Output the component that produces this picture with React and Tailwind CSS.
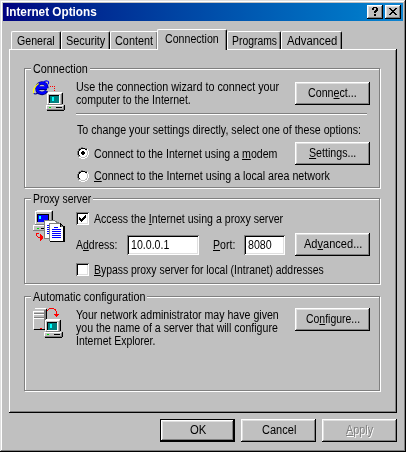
import { useLayoutEffect, useRef, useState } from "react";

// One line of text squeezed horizontally to the given width.
function T({ w, className = "", children }) {
  const ref = useRef(null);
  const [scale, setScale] = useState(1);
  useLayoutEffect(() => {
    setScale(w / ref.current.offsetWidth);
  }, [w]);
  return (
    <span className={`block h-[13px] shrink-0 text-[12px] leading-[14px] whitespace-nowrap ${className}`} style={{ width: w }}>
      <span ref={ref} className="inline-block origin-left" style={{ transform: `scaleX(${scale})` }}>
        {children}
      </span>
    </span>
  );
}

function U({ children }) {
  return <span className="underline decoration-1 underline-offset-1">{children}</span>;
}

const raised =
  "shadow-[inset_-1px_-1px_0_#000,inset_1px_1px_0_#fff,inset_-2px_-2px_0_#808080,inset_2px_2px_0_#dfdfdf]";

function Button({ w, primary, disabled, className = "", children }) {
  const edge = primary
    ? "border border-black shadow-[inset_-1px_-1px_0_#000,inset_1px_1px_0_#fff,inset_-2px_-2px_0_#808080,inset_2px_2px_0_#dfdfdf]"
    : raised;
  return (
    <button
      className={`flex h-[23px] w-[75px] shrink-0 items-start justify-center bg-[#c0c0c0] ${edge} ${
        primary ? "pt-[3px]" : "pt-1"
      } ${disabled ? "text-[#808080] [text-shadow:1px_1px_0_#fff]" : ""} ${className}`}
    >
      <T w={w}>{children}</T>
    </button>
  );
}

function Tab({ w, text, active, className = "" }) {
  return (
    <div
      className={`flex shrink-0 items-start justify-center rounded-t-[2px] border-t border-r border-l border-t-white border-r-black border-l-white bg-[#c0c0c0] shadow-[inset_-1px_0_0_#808080] ${
        active ? "relative z-10 -mb-px h-[21px] pt-[2px]" : "h-[18px] pt-[2px]"
      } ${className}`}
    >
      <T w={w}>{text}</T>
    </div>
  );
}

function Group({ title, titleWidth, className = "", children }) {
  return (
    <fieldset className={`min-w-0 ${className}`}>
      <div className="h-full border border-[#808080] shadow-[1px_1px_0_#fff,inset_1px_1px_0_#fff]">
        <div className="-mt-[7px] ml-[6px] flex w-fit bg-[#c0c0c0] px-[2px]">
          <T w={titleWidth}>{title}</T>
        </div>
        {children}
      </div>
    </fieldset>
  );
}

function Radio({ checked }) {
  return (
    <svg width="12" height="12" viewBox="0 0 12 12" className="shrink-0" shapeRendering="crispEdges">
      <path d="M4 0h4v1h2v1H8V1zM2 1h2v1H2zM1 2h1v2H1zM0 4h1v4H0zM1 8h1v2H1zM4 0v1h4V0z" fill="#808080" />
      <path d="M4 1h4v1h2v1H8V2H4v1H2V2h2zM2 3h1v1H2v4H1V4h1zM2 8h1v1H2z" fill="#000" />
      <path d="M10 2h1v2h1v4h-1v2h-1v1H8v1H4v-1H2v-1h2v1h4v-1h2V8h1V4h-1z" fill="#fff" />
      <path d="M4 2h4v1h1v1h1v4H9v1H8v1H4V9H3V8H2V4h1V3h1z" fill="#fff" />
      {checked && <path d="M5 4h2v1h1v2H7v1H5V7H4V5h1z" fill="#000" />}
    </svg>
  );
}

const sunken =
  "bg-white shadow-[inset_1px_1px_0_#808080,inset_-1px_-1px_0_#fff,inset_2px_2px_0_#000,inset_-2px_-2px_0_#dfdfdf]";

function Check({ checked }) {
  return (
    <div className={`size-[13px] shrink-0 ${sunken}`}>
      {checked && (
        <svg width="13" height="13" viewBox="0 0 13 13" shapeRendering="crispEdges">
          <path d="M3 5h1v1h1v1h1V6h1V5h1V4h1V3h1v3H9v1H8v1H7v1H6v1H5V9H4V8H3z" fill="#000" />
        </svg>
      )}
    </div>
  );
}

// Small grey desktop computer used by two of the icons.
function Computer({ x, y }) {
  return (
    <g transform={`translate(${x} ${y})`}>
      <path d="M2 1h15v11H2z" fill="#000" />
      <path d="M1 1h15v11H1z" fill="#c0c0c0" />
      <path d="M2 0h14v1H2zM1 1h14v1H2v10H1z" fill="#fff" />
      <path d="M15 2h1v10h-1z" fill="#808080" />
      <path d="M3 3h10v8H3z" fill="#000" />
      <path d="M4 4h9v7H4z" fill="#008080" />
      <path d="M6 5h2v4H6z" fill="#00ffff" />
      <path d="M13 3h1v9H3v-1h10z" fill="#fff" />
      <path d="M1 13h18v5h-1v1H1z" fill="#000" />
      <path d="M0 13h18v5H0z" fill="#c0c0c0" />
      <path d="M0 13h17v1H1v3H0z" fill="#fff" />
      <path d="M17 14h1v4H1v-1h16zM2 12h14v1H2z" fill="#808080" />
      <path d="M10 15h6v1h-6z" fill="#000" />
      <path d="M3 15h2v1H3z" fill="#00e000" />
    </g>
  );
}

function ConnectIcon() {
  return (
    <svg width="32" height="32" viewBox="0 0 32 32" className="shrink-0">
      <path d="M14 8.2H5.2M14 8.2C14 1.2 4 1.2 4 8.2C4 14.6 11.5 14.6 13.6 10.8" fill="none" stroke="#000080" strokeWidth="3.4" />
      <path d="M14 7.8H5M13.6 7.8C13.6 1.4 4 1.4 4 7.8C4 14 11 14 13 10.8" fill="none" stroke="#0000ff" strokeWidth="2.5" />
      <path d="M10.5 2C13 .6 15.6.4 15.6 2.4c0 .6-.2 1.2-.6 1.8" fill="none" stroke="#0000ff" strokeWidth="1.1" />
      <path d="M5.6 3.4C1.6 6.2-.8 11.2.8 13.2" fill="none" stroke="#ffff00" strokeWidth="1.2" />
      <path d="M.8 13.2c.8 1.2 2.8.6 4.4-.4" fill="none" stroke="#0000a0" strokeWidth="1.1" />
      <g shapeRendering="crispEdges">
        <path d="M17 6h1v1h-1zM19 6h1v1h-1zM21 6h1v1h-1zM21 8h1v1h-1zM21 10h1v1h-1z" fill="#ff0000" />
        <Computer x={13} y={12} />
      </g>
    </svg>
  );
}

function ProxyIcon() {
  return (
    <svg width="32" height="32" viewBox="0 0 32 32" className="shrink-0" shapeRendering="crispEdges">
      <path d="M4 1h16v13H4z" fill="#000" />
      <path d="M2 1h17v13H2z" fill="#c0c0c0" />
      <path d="M4 0h15v1H4zM2 1h16v1H3v12H2z" fill="#fff" />
      <path d="M18 2h1v12h-1z" fill="#808080" />
      <path d="M4 4h12v8H4z" fill="#000" />
      <path d="M5 5h10v7H5z" fill="#0000ff" />
      <path d="M6 6h2v3H6z" fill="#00ffff" />
      <path d="M0 15h13v6H0z" fill="#c0c0c0" />
      <path d="M0 15h13v1H1v4H0z" fill="#fff" />
      <path d="M0 20h12v1H0zM2 14h12v1H2z" fill="#808080" />
      <path d="M4 18h2v1H4z" fill="#00e000" />
      <path d="M8 18h3v1H8z" fill="#000" />
      <path d="M11 10h11v1h2v1h2v17H11z" fill="#808080" />
      <path d="M12 11h10v1h1v1h2v15H12z" fill="#fff" />
      <path d="M14 15h2v1h-2zM14 17h2v1h-2zM14 19h2v1h-2zM14 21h2v1h-2zM14 23h2v1h-2z" fill="#0000ff" />
      <path d="M16 13h12v1h1v1h1v1h2v16H17v-1h-1z" fill="#000" />
      <path d="M17 14h10v3h3v14H17z" fill="#fff" />
      <path d="M16 13h11v1H17v17h-1zM28 15h1v1h1v1h-2z" fill="#808080" />
      <path d="M21 17h4v1h-4zM19 19h9v1h-9zM19 21h9v1h-9zM19 23h9v1h-9zM19 25h9v1h-9zM19 27h9v1h-9z" fill="#0000ff" />
      <path d="M4 23h2v1H4v2h1v1h2v-3h1v1h1v1h1v3H9v1H8v1H7v-3H5v-1H4v-1H3v-3h1z" fill="#ff0000" />
    </svg>
  );
}

function ConfigIcon() {
  return (
    <svg width="32" height="32" viewBox="0 0 32 32" className="shrink-0" shapeRendering="crispEdges">
      <path d="M2 0h11v1h1v20h-1v1H1v-1H0V2h1V1h1z" fill="#000" />
      <path d="M0 2h11v19H0zM2 0h11v2H1V1h1z" fill="#c0c0c0" />
      <path d="M2 0h11v1H2zM0 3h11v1H1v17H0zM1 6h10v1H1zM1 10h10v1H1z" fill="#fff" />
      <path d="M11 2h2v19h-2zM1 5h10v1H1zM1 9h10v1H1z" fill="#808080" />
      <path d="M7 20h2v1H7z" fill="#ff0000" />
      <path d="M16 0h5v1h2v2h1v3h2v1h-1v1h-1v1h-1V8h-1V7h-1V6h2V3h-1V2h-1V1h-5v1h-1v1h-1V2h1V1h1z" fill="#ff0000" />
      <Computer x={11} y={11} />
    </svg>
  );
}

function CaptionButton({ children }) {
  return (
    <div className={`flex h-[14px] w-4 items-start justify-center bg-[#c0c0c0] ${raised}`}>{children}</div>
  );
}

export default function App() {
  return (
    <div className="h-[452px] w-[406px] overflow-hidden bg-[#c0c0c0] p-[3px] font-['Liberation_Sans',Arial,sans-serif] text-black shadow-[inset_-1px_-1px_0_#000,inset_1px_1px_0_#dfdfdf,inset_-2px_-2px_0_#808080,inset_2px_2px_0_#fff]">
      <header className="flex h-[18px] items-start bg-linear-to-r from-[#000080] to-[#1084d0] pt-[2px] pr-[2px] pl-[3px]">
        <T w={91} className="font-bold text-white">Internet Options</T>
        <div className="ml-auto flex gap-[2px]">
          <CaptionButton>
            <svg width="16" height="14" viewBox="0 0 16 14" shapeRendering="crispEdges">
              <path d="M6 2h4v1h1v3h-1v1H9v1H7V6h1V5h1V3H7v2H5V3h1zM7 9h2v2H7z" fill="#000" />
            </svg>
          </CaptionButton>
          <CaptionButton>
            <svg width="16" height="14" viewBox="0 0 16 14" shapeRendering="crispEdges">
              <path d="M4 3h2v1h1v1h2V4h1V3h2v1h-1v1h-1v1H9v1h1v1h1v1h1v1h-2V9H9V8H7v1H6v1H4V9h1V8h1V7h1V6H6V5H5V4H4z" fill="#000" />
            </svg>
          </CaptionButton>
        </div>
      </header>

      <nav className="mt-2 flex h-5 items-end pl-2">
        <Tab w={38} text="General" className="w-[50px]" />
        <Tab w={39} text="Security" className="w-[49px]" />
        <Tab w={38} text="Content" className="w-[48px]" />
        <Tab w={54} text="Connection" active className="-ml-px w-[70px]" />
        <Tab w={45} text="Programs" className="w-[54px]" />
        <Tab w={50} text="Advanced" className="w-[61px]" />
      </nav>

      <main className="ml-[6px] h-[364px] w-[388px] bg-[#c0c0c0] px-[15px] pt-[19px] shadow-[inset_-1px_-1px_0_#000,inset_1px_1px_0_#fff,inset_-2px_-2px_0_#808080]">
        <Group title="Connection" titleWidth={55} className="h-[120px] w-[356px]">
          <div className="mt-[5px] flex pl-2">
            <ConnectIcon />
            <div className="ml-[11px] w-[219px]">
              <T w={203}>Use the connection wizard to connect your</T>
              <T w={115}>computer to the Internet.</T>
            </div>
            <Button w={49} className="mt-[2px]">Conn<U>e</U>ct...</Button>
          </div>
          <div className="mt-px ml-[51px] h-[2px] w-[291px] border-t border-b border-t-[#808080] border-b-white" />
          <div className="mt-2 ml-[52px]">
            <T w={284}>To change your settings directly, select one of these options:</T>
          </div>
          <div className="mt-[6px] ml-[52px] flex items-start">
            <div className="pt-[5px]"><Radio checked /></div>
            <T w={183} className="mt-[5px] ml-[5px]">Connect to the Internet using a <U>m</U>odem</T>
            <Button w={47} className="ml-[18px]"><U>S</U>ettings...</Button>
          </div>
          <div className="mt-1 ml-[52px] flex items-start">
            <div className="pt-px"><Radio /></div>
            <T w={236} className="ml-[5px]"><U>C</U>onnect to the Internet using a local area network</T>
          </div>
        </Group>

        <Group title="Proxy server" titleWidth={58} className="mt-[10px] h-[86px] w-[356px]">
          <div className="mt-[5px] flex pl-2">
            <ProxyIcon />
            <div className="-mt-px ml-[11px]">
              <div className="flex items-start pt-[3px]">
                <Check checked />
                <T w={189} className="ml-[5px]">Access the <U>I</U>nternet using a proxy server</T>
              </div>
              <div className="mt-2 flex items-start">
                <T w={41} className="mt-[5px]">A<U>d</U>dress:</T>
                <div className={`mt-[2px] ml-[10px] h-5 w-[72px] pt-[3px] pl-1 ${sunken}`}><T w={38}>10.0.0.1</T></div>
                <T w={22} className="mt-[5px] ml-[14px]"><U>P</U>ort:</T>
                <div className={`mt-[2px] ml-[9px] h-5 w-[41px] pt-[3px] pl-1 ${sunken}`}><T w={24}>8080</T></div>
                <Button w={58} className="ml-[10px]">Ad<U>v</U>anced...</Button>
              </div>
              <div className="mt-[7px] flex items-start">
                <Check />
                <T w={230} className="ml-[5px]"><U>B</U>ypass proxy server for local (Intranet) addresses</T>
              </div>
            </div>
          </div>
        </Group>

        <Group title="Automatic configuration" titleWidth={112} className="mt-[12px] h-[95px] w-[356px]">
          <div className="mt-[5px] flex pl-2">
            <ConfigIcon />
            <div className="ml-[11px] w-[219px]">
              <T w={203}>Your network administrator may have given</T>
              <T w={202}>you the name of a server that will configure</T>
              <T w={79}>Internet Explorer.</T>
            </div>
            <Button w={54}>Co<U>n</U>figure...</Button>
          </div>
        </Group>
      </main>

      <footer className="mt-[6px] flex gap-[6px] pl-[157px]">
        <Button w={16} primary>OK</Button>
        <Button w={34}>Cancel</Button>
        <Button w={27} disabled><U>A</U>pply</Button>
      </footer>
    </div>
  );
}
